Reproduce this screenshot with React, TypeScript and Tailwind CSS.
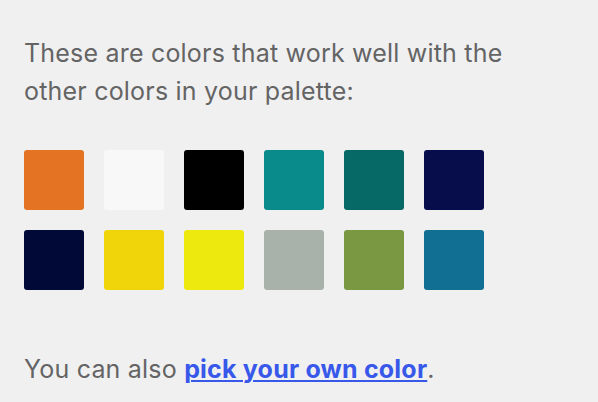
const colors = [
  "#e47423",
  "#f8f8f8",
  "#000000",
  "#0a8b8b",
  "#076966",
  "#060d4a",
  "#010937",
  "#f0d50a",
  "#ede90f",
  "#a9b2aa",
  "#799841",
  "#106f93",
];

export default function App() {
  return (
    <div className="min-h-screen bg-[#f0f0f1] px-6 pt-[34px] font-['Inter',sans-serif] tracking-[0.2px]">
      <p className="text-[25px] leading-[38px] text-[#646464] w-[520px]">
        These are colors that work well with the other colors in your palette:
      </p>

      <div className="mt-10 grid grid-cols-[repeat(6,60px)] gap-5">
        {colors.map((c) => (
          <div key={c} className="w-[60px] h-[60px] rounded-[3px]" style={{ backgroundColor: c }} />
        ))}
      </div>

      <p className="mt-[60px] text-[25px] leading-[38px] text-[#646464]">
        You can also{" "}
        <a href="#" className="font-bold text-[#3858e9] underline decoration-2 underline-offset-2">
          pick your own color
        </a>
        .
      </p>
    </div>
  );
}
